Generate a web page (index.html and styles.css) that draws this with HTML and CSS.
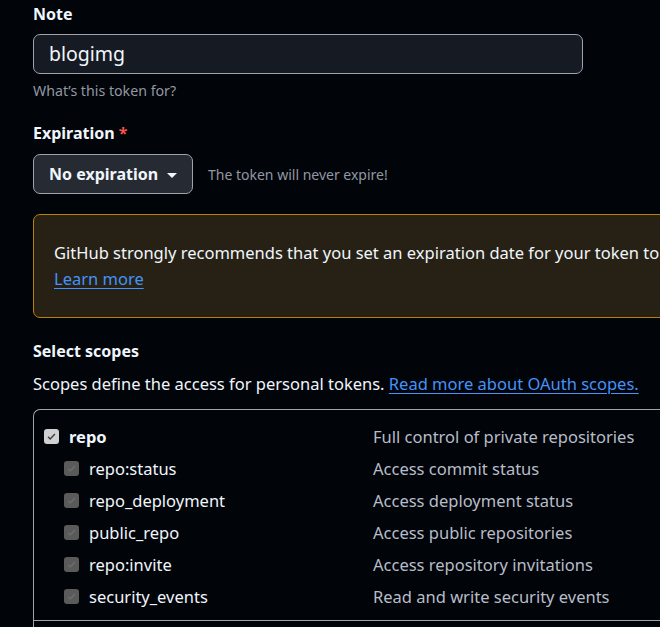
FILE: index.html
```html
<!DOCTYPE html>
<html>
<head>
<meta charset="utf-8">
<link rel="stylesheet" href="styles.css">
</head>
<body>
<div class="page">
  <div class="label">Note</div>
  <div class="input">blogimg</div>
  <div class="caption">What’s this token for?</div>

  <div class="label exp-label">Expiration <span class="req">*</span></div>
  <div class="exp-row">
    <div class="btn">No expiration <span class="caret"></span></div>
    <span class="exp-note">The token will never expire!</span>
  </div>

  <div class="warn">
    <p>GitHub strongly recommends that you set an expiration date for your token to</p>
    <a class="link">Learn more</a>
  </div>

  <div class="label scopes-label">Select scopes</div>
  <div class="scopes-desc">Scopes define the access for personal tokens. <a class="link">Read more about OAuth scopes.</a></div>

  <div class="table">
    <div class="group">
      <div class="row">
        <div class="name main"><span class="cb cb-on"><svg viewBox="0 0 16 16" width="11" height="11"><path d="M3 8.5l3 3 7-7" fill="none" stroke="#3a3a3a" stroke-width="2"/></svg></span><span class="bold">repo</span></div>
        <div class="desc">Full control of private repositories</div>
      </div>
      <div class="row">
        <div class="name sub"><span class="cb cb-dis"><svg viewBox="0 0 16 16" width="11" height="11"><path d="M3 8.5l3 3 7-7" fill="none" stroke="#6e6e6e" stroke-width="2"/></svg></span>repo:status</div>
        <div class="desc">Access commit status</div>
      </div>
      <div class="row">
        <div class="name sub"><span class="cb cb-dis"><svg viewBox="0 0 16 16" width="11" height="11"><path d="M3 8.5l3 3 7-7" fill="none" stroke="#6e6e6e" stroke-width="2"/></svg></span>repo_deployment</div>
        <div class="desc">Access deployment status</div>
      </div>
      <div class="row">
        <div class="name sub"><span class="cb cb-dis"><svg viewBox="0 0 16 16" width="11" height="11"><path d="M3 8.5l3 3 7-7" fill="none" stroke="#6e6e6e" stroke-width="2"/></svg></span>public_repo</div>
        <div class="desc">Access public repositories</div>
      </div>
      <div class="row">
        <div class="name sub"><span class="cb cb-dis"><svg viewBox="0 0 16 16" width="11" height="11"><path d="M3 8.5l3 3 7-7" fill="none" stroke="#6e6e6e" stroke-width="2"/></svg></span>repo:invite</div>
        <div class="desc">Access repository invitations</div>
      </div>
      <div class="row">
        <div class="name sub"><span class="cb cb-dis"><svg viewBox="0 0 16 16" width="11" height="11"><path d="M3 8.5l3 3 7-7" fill="none" stroke="#6e6e6e" stroke-width="2"/></svg></span>security_events</div>
        <div class="desc">Read and write security events</div>
      </div>
    </div>
    <div class="group"></div>
  </div>
</div>
</body>
</html>
```
FILE: styles.css
```css
html, body {
  margin: 0;
  padding: 0;
  background: #010409;
  overflow: hidden;
}
body {
  width: 660px;
  height: 627px;
  font-family: "Noto Sans", "Liberation Sans", sans-serif;
  color: #f0f6fc;
}
.page {
  padding: 2px 0 0 33px;
  width: 800px;
}
.label {
  font-weight: 700;
  font-size: 16px;
  line-height: 24px;
  height: 24px;
}
.input {
  margin-top: 8px;
  height: 38px;
  box-sizing: content-box;
  border: 1px solid #9ea4ad;
  border-radius: 7px;
  background: #161b23;
  font-size: 19.5px;
  line-height: 38px;
  padding: 0 0 0 15px;
  width: 533px;
}
.caption {
  margin-top: 6px;
  font-size: 14.2px;
  line-height: 22px;
  color: #9198a1;
}
.exp-label {
  margin-top: 19px;
}
.req {
  color: #f85149;
}
.exp-row {
  margin-top: 9px;
  display: flex;
  align-items: center;
  gap: 15px;
}
.btn {
  height: 38px;
  border: 1px solid #9ea4ad;
  border-radius: 7px;
  background: #262b33;
  box-sizing: content-box;
  display: flex;
  align-items: center;
  font-weight: 700;
  font-size: 16px;
  padding-left: 15px;
  width: 143px;
  gap: 9px;
}
.caret {
  width: 0;
  height: 0;
  border-left: 5px solid transparent;
  border-right: 5px solid transparent;
  border-top: 5px solid #f0f6fc;
  margin-top: 2px;
}
.exp-note {
  font-size: 14px;
  color: #9198a1;
}
.warn {
  margin-top: 20px;
  height: 102px;
  box-sizing: content-box;
  border: 1px solid #bb8009;
  border-radius: 7px;
  background: #272115;
  padding: 0 0 0 20px;
  width: 900px;
  display: flex;
  flex-direction: column;
  justify-content: center;
  font-size: 16.5px;
  line-height: 26px;
  white-space: nowrap;
}
.warn p {
  margin: 0;
}
.link {
  color: #4493f8;
  text-decoration: underline;
  text-underline-offset: 3px;
}
.warn .link {
  align-self: flex-start;
}
.scopes-label {
  margin-top: 21px;
}
.scopes-desc {
  margin-top: 8px;
  font-size: 16.5px;
  line-height: 26px;
  white-space: nowrap;
}
.table {
  margin-top: 12px;
  border: 1px solid #9ea4ad;
  border-radius: 7px 0 0 0;
  border-right: none;
  width: 800px;
}
.group {
  padding: 10px 0 8px 10px;
}
.group + .group {
  border-top: 1px solid #9ea4ad;
  height: 40px;
}
.row {
  display: grid;
  grid-template-columns: 329px 1fr;
  height: 32px;
  align-items: center;
  font-size: 16.5px;
}
.name {
  display: flex;
  align-items: center;
  gap: 10px;
  color: #f0f6fc;
}
.name.sub {
  padding-left: 20px;
}
.bold {
  font-weight: 700;
}
.desc {
  color: #b7bdc8;
}
.cb {
  width: 15px;
  height: 15px;
  border-radius: 3px;
  display: flex;
  align-items: center;
  justify-content: center;
  flex: none;
}
.cb-on {
  background: #d0d0d0;
}
.cb-dis {
  background: #5a5a5a;
}
```
